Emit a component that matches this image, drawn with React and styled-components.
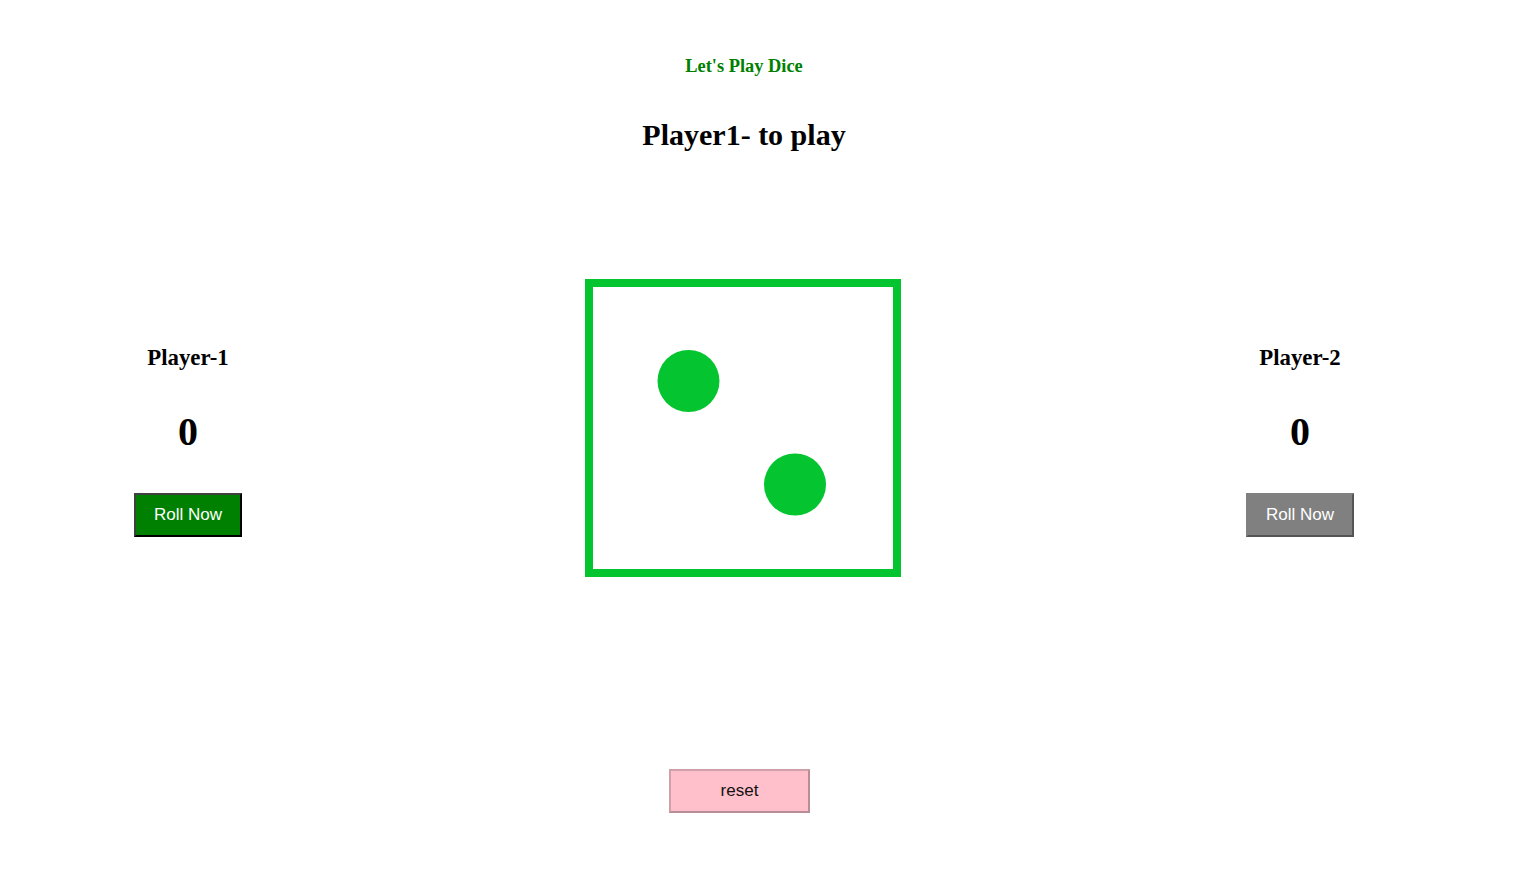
import React, { useState } from "react";
import styled, { createGlobalStyle } from "styled-components";

const GlobalStyle = createGlobalStyle`
  body {
    margin: 0;
    background: #fff;
    font-family: "Liberation Serif", "Times New Roman", serif;
  }
`;

const Page = styled.div`
  width: 1488px;
  padding-top: 55px;
  text-align: center;
`;

const Title = styled.h3`
  margin: 0;
  font-size: 18.4px;
  line-height: 22px;
  font-weight: bold;
  color: #008000;
`;

const Turn = styled.h1`
  margin: 40px 0 0 0;
  font-size: 30px;
  line-height: 36px;
  font-weight: bold;
  color: #000;
`;

const Board = styled.div`
  display: grid;
  grid-template-columns: 376px 1fr 376px;
  margin-top: 126px;
  align-items: start;
`;

const PlayerCol = styled.div`
  display: flex;
  flex-direction: column;
  align-items: center;
  padding-top: 66px;
`;

const PlayerName = styled.h2`
  margin: 0;
  font-size: 22.8px;
  line-height: 26px;
  font-weight: bold;
`;

const Score = styled.div`
  margin-top: 38px;
  font-size: 40px;
  line-height: 46px;
  font-weight: bold;
`;

const RollButton = styled.button`
  margin-top: 38px;
  width: 108px;
  height: 44px;
  padding: 0;
  font-family: "Liberation Sans", Arial, sans-serif;
  font-size: 17px;
  color: #fff;
  background: ${(p) => (p.$active ? "#008000" : "#808080")};
  border: 2px solid;
  border-color: ${(p) =>
    p.$active ? "#404040 #000 #000 #404040" : "#808080 #555 #555 #808080"};
  cursor: pointer;
`;

const DiceWrap = styled.div`
  display: flex;
  justify-content: center;
  padding-right: 2px;
`;

const ResetRow = styled.div`
  display: flex;
  justify-content: center;
  padding-right: 9px;
  margin-top: 192px;
`;

const ResetButton = styled.button`
  width: 141px;
  height: 44px;
  padding: 0;
  font-family: "Liberation Sans", Arial, sans-serif;
  font-size: 17px;
  color: #111;
  background: #ffc0cb;
  border: 2px solid;
  border-color: #cfa0a9 #b98d95 #b98d95 #cfa0a9;
  cursor: pointer;
`;

const PIP = "#04c52f";

function Dice() {
  return (
    <svg width="316" height="298" viewBox="0 0 316 298">
      <rect x="4" y="4" width="308" height="290" fill="#fff" stroke={PIP} strokeWidth="8" />
      <circle cx="103.5" cy="102" r="31" fill={PIP} />
      <circle cx="210" cy="205.5" r="31" fill={PIP} />
    </svg>
  );
}

export default function App() {
  const [scores, setScores] = useState([0, 0]);
  const [turn, setTurn] = useState(0);

  const roll = (i) => {
    if (i !== turn) return;
    const v = Math.floor(Math.random() * 6) + 1;
    setScores((s) => s.map((x, k) => (k === i ? x + v : x)));
    setTurn(1 - i);
  };

  return (
    <Page>
      <GlobalStyle />
      <Title>Let's Play Dice</Title>
      <Turn>Player{turn + 1}- to play</Turn>
      <Board>
        <PlayerCol>
          <PlayerName>Player-1</PlayerName>
          <Score>{scores[0]}</Score>
          <RollButton $active={turn === 0} onClick={() => roll(0)}>Roll Now</RollButton>
        </PlayerCol>
        <DiceWrap>
          <Dice />
        </DiceWrap>
        <PlayerCol>
          <PlayerName>Player-2</PlayerName>
          <Score>{scores[1]}</Score>
          <RollButton $active={turn === 1} onClick={() => roll(1)}>Roll Now</RollButton>
        </PlayerCol>
      </Board>
      <ResetRow>
        <ResetButton onClick={() => { setScores([0, 0]); setTurn(0); }}>reset</ResetButton>
      </ResetRow>
    </Page>
  );
}
